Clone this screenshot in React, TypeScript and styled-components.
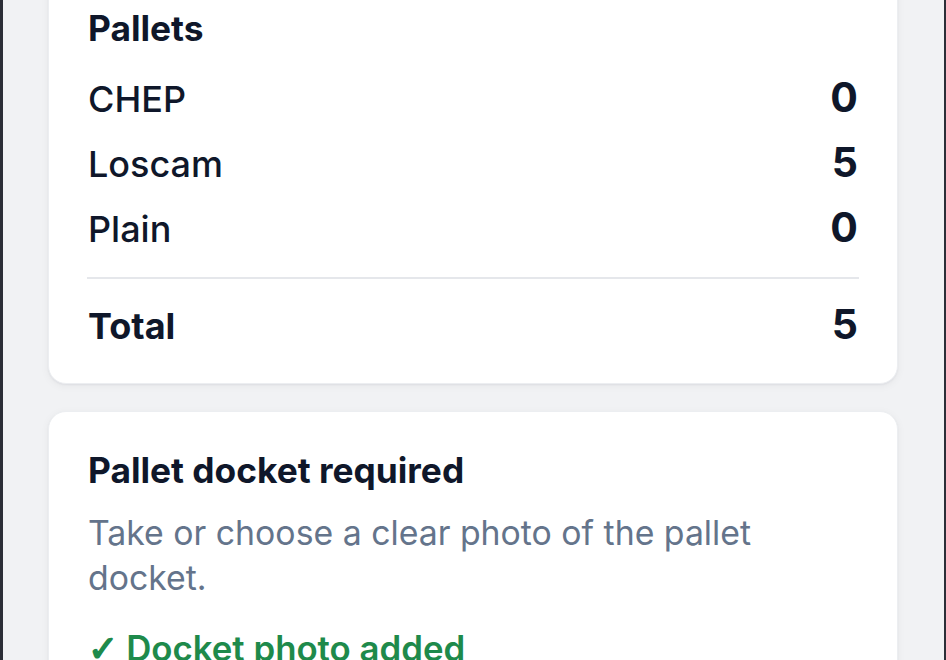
import React from "react";
import styled, { createGlobalStyle } from "styled-components";

const GlobalStyle = createGlobalStyle`
  html, body {
    margin: 0;
    padding: 0;
    background: #2c2e37;
  }
  body {
    font-family: Inter, "Noto Sans", "Liberation Sans", sans-serif;
    -webkit-font-smoothing: antialiased;
  }
`;

const Frame = styled.div`
  height: 660px;
  padding: 0 2px 0 3px;
  box-sizing: border-box;
  background: #2c2e37;
`;

const Screen = styled.div`
  height: 100%;
  background: #f1f2f4;
  overflow: hidden;
`;

const Content = styled.div`
  margin-top: -30px;
  padding: 0 46px 0 45px;
  display: flex;
  flex-direction: column;
  gap: 27px;
`;

const Card = styled.section<{ $pt: number; $pb: number }>`
  background: #ffffff;
  border-radius: 18px;
  padding: ${(p) => p.$pt}px 39px ${(p) => p.$pb}px 39px;
  box-shadow: 0 1px 2px rgba(15, 23, 42, 0.05), 0 2px 8px rgba(15, 23, 42, 0.05);
  border: 1px solid #eceef1;
`;

const Title = styled.h2`
  margin: 0;
  font-size: 35.3px;
  line-height: 44px;
  font-weight: 700;
  color: #0f172a;
`;

const List = styled.div`
  display: flex;
  flex-direction: column;
  gap: 13px;
  margin-top: 21px;
`;

const Row = styled.div`
  display: flex;
  justify-content: space-between;
  align-items: baseline;
  line-height: 50px;
  color: #0f172a;
`;

const Label = styled.span<{ $strong?: boolean }>`
  font-size: 36px;
  font-weight: ${(p) => (p.$strong ? 700 : 500)};
`;

const Value = styled.span`
  font-size: 41px;
  font-weight: 700;
`;

const Divider = styled.hr`
  border: 0;
  height: 2px;
  background: #e5e7eb;
  margin: 23px -1px 20px -1px;
`;

const Description = styled.p`
  margin: 17px 0 0;
  font-size: 33.8px;
  line-height: 45px;
  font-weight: 400;
  color: #64748b;
`;

const Success = styled.div`
  margin-top: 26px;
  font-size: 34.8px;
  line-height: 44px;
  font-weight: 600;
  color: #1e8a4b;
`;

const Check = styled.span`
  font-family: "DejaVu Sans", sans-serif;
  font-weight: 700;
  font-size: 36px;
  -webkit-text-stroke: 1.6px #1e8a4b;
  margin-right: 8px;
`;

const pallets = [
  { name: "CHEP", count: 0 },
  { name: "Loscam", count: 5 },
  { name: "Plain", count: 0 },
];

export default function App() {
  const total = pallets.reduce((s, p) => s + p.count, 0);
  return (
    <>
      <GlobalStyle />
      <Frame>
        <Screen>
          <Content>
            <Card $pt={36} $pb={32}>
              <Title>Pallets</Title>
              <List>
                {pallets.map((p) => (
                  <Row key={p.name}>
                    <Label>{p.name}</Label>
                    <Value>{p.count}</Value>
                  </Row>
                ))}
              </List>
              <Divider />
              <Row>
                <Label $strong>Total</Label>
                <Value>{total}</Value>
              </Row>
            </Card>
            <Card $pt={37} $pb={40}>
              <Title>Pallet docket required</Title>
              <Description>
                Take or choose a clear photo of the pallet docket.
              </Description>
              <Success>
                <Check>✓</Check>Docket photo added
              </Success>
            </Card>
          </Content>
        </Screen>
      </Frame>
    </>
  );
}
